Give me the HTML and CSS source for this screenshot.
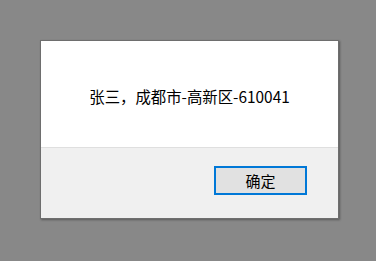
FILE: index.html
```html
<!DOCTYPE html>
<html lang="zh-CN">
<head>
<meta charset="utf-8">
<link rel="stylesheet" href="styles.css">
</head>
<body>
<div class="dialog">
  <div class="message">张三，成都市-高新区-610041</div>
  <div class="actions">
    <button class="btn">确定</button>
  </div>
</div>
</body>
</html>
```
FILE: styles.css
```css
html, body {
  margin: 0;
  padding: 0;
}
body {
  background: #888888;
  width: 376px;
  height: 261px;
  padding: 40px 0 0 40px;
  box-sizing: border-box;
  font-family: "Noto Sans CJK SC", "Noto Sans", sans-serif;
}
.dialog {
  width: 299px;
  height: 179px;
  box-sizing: border-box;
  border: 1px solid #6e6e6e;
  background: #ffffff;
  box-shadow: 1px 1px 2px rgba(0, 0, 0, 0.35);
  display: flex;
  flex-direction: column;
}
.message {
  height: 106px;
  display: flex;
  align-items: center;
  justify-content: center;
  padding-top: 4px;
  box-sizing: border-box;
  font-size: 15.4px;
  color: #000;
  white-space: nowrap;
}
.actions {
  flex: 1;
  background: #f0f0f0;
  border-top: 1px solid #dfdfdf;
  display: flex;
  justify-content: flex-end;
  align-items: flex-start;
  padding: 18px 31px 0 0;
}
.btn {
  width: 93px;
  height: 29px;
  box-sizing: border-box;
  border: 2px solid #0078d7;
  background: #e1e1e1;
  font-family: "Noto Sans CJK SC", sans-serif;
  font-size: 15px;
  color: #000;
  padding: 0;
  margin: 0;
}
```
